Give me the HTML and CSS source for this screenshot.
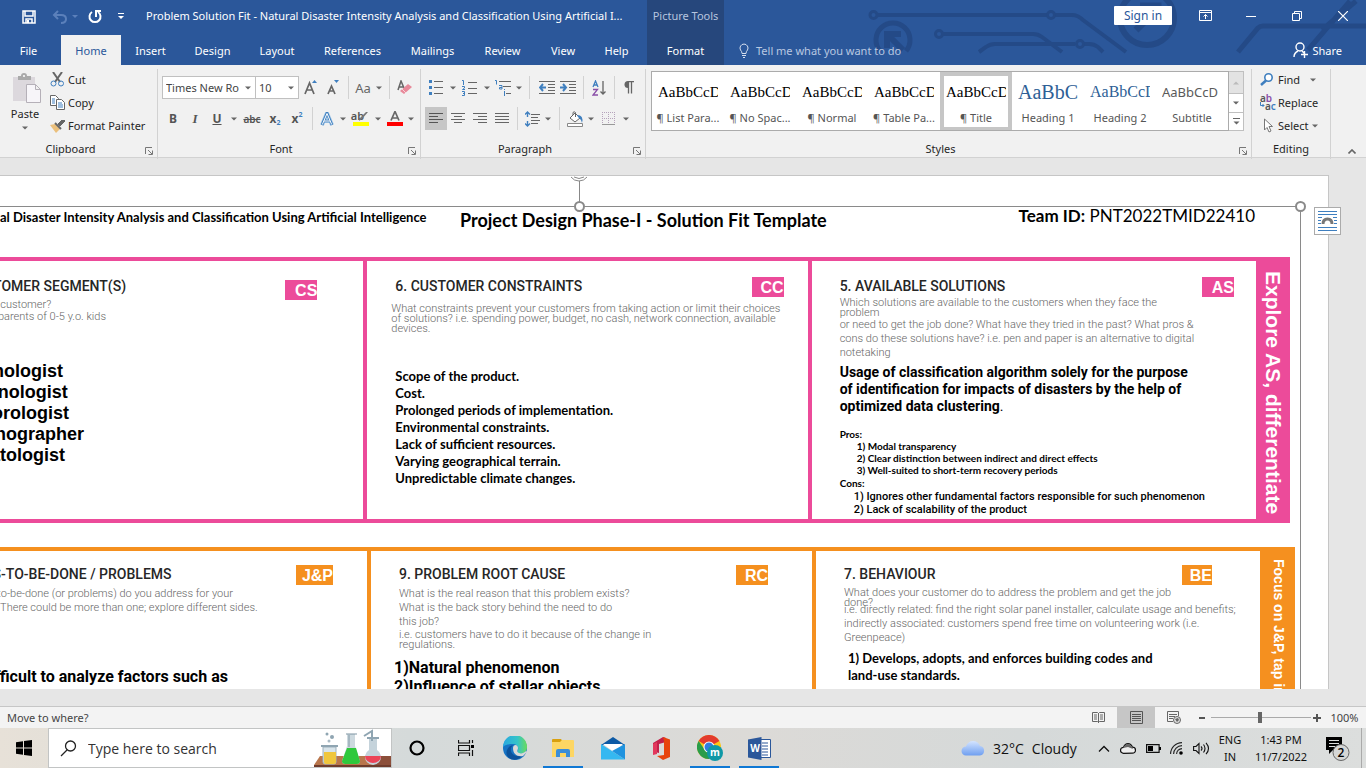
FILE: index.html
```html
<!DOCTYPE html>
<html lang="en">
<head>
<meta charset="utf-8">
<title>Problem Solution Fit - Word</title>
<link rel="stylesheet" href="styles.css">
</head>
<body>
<svg width="0" height="0" class="defs" aria-hidden="true">
  <symbol id="caret" viewBox="0 0 6 4"><path d="M0 0.5h6L3 3.5z" fill="#666"/></symbol>
  <symbol id="launch" viewBox="0 0 8 8"><path d="M.5 7V.5H7M3 3l4 4M7.5 3.5v4h-4" fill="none" stroke="#777"/></symbol>
</svg>
<div class="app">
  <header class="top">
    <svg class="circuit" viewBox="860 0 506 65" width="506" height="65" aria-hidden="true">
      <g fill="none" stroke="#244a87" stroke-width="4">
        <circle cx="873.500" cy="15" r="3.500" stroke-width="3"/><path d="M878 15h169M1055 15h17q6 0 11 5l43 32"/><circle cx="1051" cy="15" r="3.500" stroke-width="3"/>
        <circle cx="939" cy="34" r="3.500" stroke-width="3"/><path d="M943 34h90q5 0 9 3l20 15M979 52l7-5q4-3 9-3h80M1084 44h5q5 0 9 3l5 5"/><circle cx="1080" cy="44" r="3.500" stroke-width="3"/>
        <path d="M880 51a17 17 0 1 1 26 0" stroke-width="5"/><path d="M887 48V34h14M888 35l15 15" stroke-width="6"/>
        <circle cx="1147" cy="18" r="27" stroke-width="6"/><path d="M1136 30l22-22M1140 6h18v18" stroke-width="7"/>
        <path d="M1238 52l20-24q2-2 5-2h103M1308 50l42-49M1322 30l34-29" stroke-width="5"/>
      </g>
    </svg>
    <div class="titlebar">
      <div class="quick">
        <button aria-label="Save"><svg width="14" height="14" viewBox="0 0 14 14"><path d="M1 1h12v12H1zM3 1v5h8V1M4 13V9h6v4" fill="none" stroke="#fff" stroke-width="1.500"/><path d="M5 10h2v3H5z" fill="#fff"/></svg></button>
        <button aria-label="Undo"><svg width="26" height="14" viewBox="0 0 26 14"><path d="M6 1L2 5l4 4M2 5h7q5 0 5 4t-5 4" fill="none" stroke="#5b80bb" stroke-width="2"/><path d="M20 5h6l-3 3z" fill="#5b80bb"/></svg></button>
        <button aria-label="Redo"><svg width="14" height="15" viewBox="0 0 14 15"><path d="M4 3a5.500 5.500 0 1 0 6 0" fill="none" stroke="#fff" stroke-width="2"/><path d="M8 8V2h5" fill="none" stroke="#fff" stroke-width="2"/></svg></button>
        <button aria-label="Customize"><svg width="6" height="7" viewBox="0 0 6 7"><path d="M0 .5h6" stroke="#fff"/><path d="M0 3h6L3 6z" fill="#fff"/></svg></button>
      </div>
      <div class="doctitle">Problem Solution Fit - Natural Disaster Intensity Analysis and Classification Using Artificial I...</div>
      <div class="context">Picture Tools</div>
      <div class="wincontrols">
        <button class="signin">Sign in</button>
        <button aria-label="Ribbon options"><svg width="13" height="11" viewBox="0 0 13 11"><path d="M.5.5h12v10H.5zM.5 2.500h12M6.500 9V4.500M4.500 6.500l2-2 2 2" fill="none" stroke="#fff"/></svg></button>
        <button aria-label="Minimize"><svg width="10" height="10" viewBox="0 0 10 10"><path d="M0 5.500h10" stroke="#fff"/></svg></button>
        <button aria-label="Restore"><svg width="10" height="10" viewBox="0 0 10 10"><path d="M.5 2.500h7v7h-7zM2.500 2.500v-2h7v7h-2" fill="none" stroke="#fff"/></svg></button>
        <button aria-label="Close"><svg width="10" height="10" viewBox="0 0 10 10"><path d="M0 0l10 10M10 0L0 10" stroke="#fff" stroke-width="1.200"/></svg></button>
      </div>
    </div>
    <nav class="tabs">
      <button class="file">File</button><button class="active">Home</button><button>Insert</button><button>Design</button><button>Layout</button><button>References</button><button>Mailings</button><button>Review</button><button>View</button><button class="help">Help</button><button class="format">Format</button>
      <button class="tell"><svg width="10" height="15" viewBox="0 0 10 15"><path d="M3 10.500Q3 8.500 1.500 7a4 4 0 1 1 7 0Q7 8.500 7 10.500zM3 12.500h4M4 14.500h2" fill="none" stroke="#d5deee"/></svg>Tell me what you want to do</button>
      <button class="share"><svg width="16" height="16" viewBox="0 0 16 16"><circle cx="7" cy="5" r="4" fill="none" stroke="#fff" stroke-width="1.400"/><path d="M1 15q0-4 4-6M9 9l2 2M8 12.500h7M11.500 9v7" fill="none" stroke="#fff" stroke-width="1.400"/></svg>Share</button>
    </nav>
  </header>

  <section class="ribbon">
    <div class="group clipboard">
      <div class="body">
        <button class="paste"><svg width="30" height="32" viewBox="0 0 30 32"><path d="M1 4h22v24H1z" fill="#dcd8dd"/><path d="M6 7V3h3q0-3 3-3t3 3h4v4z" fill="#aaa"/><circle cx="12" cy="3" r="1" fill="#fff"/><path d="M14.500 11.500h9l5 5v13h-14zM23.500 11.500v5h5" fill="#f7f5f9" stroke="#b5b0b8"/></svg><span>Paste</span><svg width="6" height="4"><use href="#caret"/></svg></button>
        <div class="stack">
          <button><svg width="15" height="15" viewBox="0 0 15 15"><path d="M3 0l7 10M12 0L5 10" stroke="#666" stroke-width="2"/><circle cx="3.500" cy="11.500" r="2.500" fill="none" stroke="#3f7fbf"/><circle cx="11" cy="11.500" r="2.500" fill="none" stroke="#3f7fbf"/></svg>Cut</button>
          <button><svg width="15" height="15" viewBox="0 0 15 15"><path d="M.5.500h5l3 3v7h-8z" fill="#fff" stroke="#666"/><path d="M6.500 4.500h5l3 3v7h-8z" fill="#fff" stroke="#666"/><path d="M2 4h3M2 6h3M2 8h3M8 8h4M8 10h5M8 12h5" stroke="#3f7fbf"/></svg>Copy</button>
          <button><svg width="15" height="14" viewBox="0 0 15 14"><path d="M0 6l5-1 5 5-4 4z" fill="#ebc07c"/><path d="M5 4l6 6" stroke="#666" stroke-width="2"/><path d="M8 5l4-4 1 1 1-1 1 1-5 5z" fill="#666" stroke="#666"/></svg>Format Painter</button>
        </div>
      </div>
      <div class="label">Clipboard</div><svg class="launch" width="8" height="8"><use href="#launch"/></svg>
    </div>

    <div class="group fontgroup">
      <div class="body rows">
        <div class="row font1">
          <label class="combo"><select aria-label="Font"><option>Times New Ro</option></select><svg width="6" height="4"><use href="#caret"/></svg></label>
          <label class="combo size"><select aria-label="Font size"><option>10</option></select><svg width="6" height="4"><use href="#caret"/></svg></label>
          <button aria-label="Grow font"><svg width="14" height="15" viewBox="0 0 14 15"><path d="M1 14L5.500 3 10 14M2.500 10h6" fill="none" stroke="#666" stroke-width="1.700"/><path d="M8 3h5L10.500 0z" fill="#3f7fbf"/></svg></button>
          <button aria-label="Shrink font"><svg width="14" height="15" viewBox="0 0 14 15"><path d="M1 14L4.500 6 8 14M2 11h5" fill="none" stroke="#666" stroke-width="1.700"/><path d="M7 0h5L9.500 3z" fill="#3f7fbf"/></svg></button>
          <i class="sep"></i>
          <button class="case">Aa<svg width="6" height="4"><use href="#caret"/></svg></button>
          <i class="sep"></i>
          <button aria-label="Clear formatting"><svg width="15" height="15" viewBox="0 0 15 15"><path d="M1 10L4 1l3 7M2 7h4" fill="none" stroke="#666" stroke-width="1.500"/><path d="M3 11l8-7 4 3-8 7z" fill="#e8899a"/><path d="M5 9l4 4" stroke="#f8d5da"/></svg></button>
        </div>
        <div class="row font2">
          <button class="b">B</button><button class="it">I</button><button class="u">U</button><button aria-label="Underline style"><svg width="6" height="4"><use href="#caret"/></svg></button>
          <button class="strike">abc</button><button class="sub">x<sub>2</sub></button><button class="sub">x<sup>2</sup></button><i class="sep"></i>
          <button aria-label="Text effects"><svg width="14" height="14" viewBox="0 0 14 14"><path d="M2 13L7 1l5 12M4 9h6" fill="none" stroke="#a9cbe8" stroke-width="4"/><path d="M2 13L7 1l5 12M4 9h6" fill="none" stroke="#3f7fbf" stroke-width="2.600"/><path d="M2.300 12.500L7 1.500l4.700 11M4 9h6" fill="none" stroke="#fff"/></svg></button><button aria-label="Effects menu"><svg width="6" height="4"><use href="#caret"/></svg></button>
          <button class="mark" aria-label="Highlight">ab<svg width="16" height="15" viewBox="0 0 16 15"><path d="M15 1L9 8l-3 2 1-3 6-6z" fill="#777"/><path d="M0 11h16v4H0z" fill="#ff0"/></svg></button><button aria-label="Highlight menu"><svg width="6" height="4"><use href="#caret"/></svg></button>
          <button aria-label="Font color"><svg width="16" height="15" viewBox="0 0 16 15"><path d="M4 9.500L8 .5l4 9M5.500 7h5" fill="none" stroke="#666" stroke-width="1.700"/><path d="M0 11h16v4H0z" fill="red"/></svg></button><button aria-label="Color menu"><svg width="6" height="4"><use href="#caret"/></svg></button>
        </div>
      </div>
      <div class="label">Font</div><svg class="launch" width="8" height="8"><use href="#launch"/></svg>
    </div>

    <div class="group paragraph">
      <div class="body rows">
        <div class="row para1">
          <button aria-label="Bullets"><svg width="14" height="15" viewBox="0 0 14 15"><path d="M5 1.500h9M5 7.500h9M5 13.500h9" stroke="#666"/><path d="M0 0h3v3H0zM0 6h3v3H0zM0 12h3v3H0z" fill="#3f7fbf"/></svg></button><button aria-label="Bullets menu"><svg width="6" height="4"><use href="#caret"/></svg></button>
          <button aria-label="Numbering"><svg width="15" height="16" viewBox="0 0 15 16"><path d="M6 2.500h9M6 8.500h9M6 13.500h9" stroke="#666"/><path d="M0 .500h1.500V5M0 6.500h2.500v1.500L.5 9.500H3M0 11.500h2.500v4H0M1 13.500h1.500" fill="none" stroke="#3f7fbf"/></svg></button><button aria-label="Numbering menu"><svg width="6" height="4"><use href="#caret"/></svg></button>
          <button aria-label="Multilevel list"><svg width="17" height="16" viewBox="0 0 17 16"><path d="M4 1.500h12M8 6.500h8M11 13.500h5" stroke="#666"/><path d="M0 .500h1.500v4M4 5.500h3V9H4.500V7.500H7M9.500 9v1M9.500 11v5" fill="none" stroke="#3f7fbf"/></svg></button><button aria-label="Multilevel menu"><svg width="6" height="4"><use href="#caret"/></svg></button>
          <i class="sep"></i>
          <button aria-label="Decrease indent"><svg width="16" height="14" viewBox="0 0 16 14"><path d="M0 .5h16M9 3.500h7M9 6.500h7M9 9.500h7M0 12.500h16" stroke="#666"/><path d="M1 6.500h6M4 3L1 6.500 4 10" fill="none" stroke="#3f7fbf" stroke-width="2"/></svg></button>
          <button aria-label="Increase indent"><svg width="16" height="14" viewBox="0 0 16 14"><path d="M0 .5h16M9 3.500h7M9 6.500h7M9 9.500h7M0 12.500h16" stroke="#666"/><path d="M0 6.500h6M3 3l3 3.500L3 10" fill="none" stroke="#3f7fbf" stroke-width="2"/></svg></button>
          <i class="sep"></i>
          <button aria-label="Sort"><svg width="14" height="16" viewBox="0 0 14 16"><path d="M1 7l2.500-6L6 7M2 5h3" fill="none" stroke="#3f7fbf" stroke-width="1.300"/><path d="M1 9.500h4.500L1 15h5" fill="none" stroke="#8a4fa8" stroke-width="1.300"/><path d="M11 1v13M8.500 11.500L11 14l2.500-2.500" fill="none" stroke="#666" stroke-width="1.300"/></svg></button>
          <i class="sep"></i>
          <button aria-label="Show marks"><svg width="10" height="13" viewBox="0 0 10 13"><path d="M4.500 0v12.500M7.500 0v12.500M4 .5h6" fill="none" stroke="#666" stroke-width="1.300"/><path d="M4.500 0H4a3.500 3.500 0 0 0 0 7h.5z" fill="#666"/></svg></button>
        </div>
        <div class="row para2">
          <button class="on" aria-label="Align left"><svg width="14" height="13" viewBox="0 0 14 13"><path d="M0 1.500h14M0 4.500h9M0 7.500h14M0 10.500h9" stroke="#555"/></svg></button>
          <button aria-label="Center"><svg width="14" height="13" viewBox="0 0 14 13"><path d="M0 1.500h14M3 4.500h8M0 7.500h14M3 10.500h8" stroke="#666"/></svg></button>
          <button aria-label="Align right"><svg width="14" height="13" viewBox="0 0 14 13"><path d="M0 1.500h14M5 4.500h9M0 7.500h14M5 10.500h9" stroke="#666"/></svg></button>
          <button aria-label="Justify"><svg width="14" height="13" viewBox="0 0 14 13"><path d="M0 1.500h14M0 4.500h14M0 7.500h14M0 10.500h14" stroke="#666"/></svg></button>
          <i class="sep"></i>
          <button aria-label="Line spacing"><svg width="15" height="16" viewBox="0 0 15 16"><path d="M6 3.500h9M6 6.500h7M6 9.500h9M6 12.500h7" stroke="#666"/><path d="M2.500 1v5M2.500 10v5M0 3.500L2.500 1 5 3.500M0 12.500L2.500 15 5 12.500" fill="none" stroke="#3f7fbf" stroke-width="1.400"/></svg></button><button aria-label="Spacing menu"><svg width="6" height="4"><use href="#caret"/></svg></button>
          <i class="sep"></i>
          <button aria-label="Shading"><svg width="17" height="16" viewBox="0 0 17 16"><path d="M3 7l5-5 5 5-5 4zM6 4V1.500q1-1.500 2.500 0V6" fill="#fff" stroke="#666"/><path d="M10 4q7 0 5 8-1-4-4-6z" fill="#3f7fbf"/><path d="M.5 12.500h15v3H.5z" fill="#fff" stroke="#888"/></svg></button><button aria-label="Shading menu"><svg width="6" height="4"><use href="#caret"/></svg></button>
          <button aria-label="Borders"><svg width="13" height="13" viewBox="0 0 13 13"><path d="M.5 0v12M6.500 0v12M12.500 0v12M0 .5h13M0 6.500h13" stroke="#b5a3bb" stroke-dasharray="1 1"/><path d="M0 12.500h13" stroke="#999"/></svg></button><button aria-label="Borders menu"><svg width="6" height="4"><use href="#caret"/></svg></button>
        </div>
      </div>
      <div class="label">Paragraph</div><svg class="launch" width="8" height="8"><use href="#launch"/></svg>
    </div>

    <div class="group styles">
      <div class="body">
        <div class="gallery">
          <button><b>AaBbCcD</b><span>¶ List Para...</span></button>
          <button><b>AaBbCcD</b><span>¶ No Spac...</span></button>
          <button><b>AaBbCcD</b><span>¶ Normal</span></button>
          <button><b>AaBbCcD</b><span>¶ Table Pa...</span></button>
          <button class="picked"><b>AaBbCcD</b><span>¶ Title</span></button>
          <button><b class="h1">AaBbC</b><span>Heading 1</span></button>
          <button><b class="h2">AaBbCcD</b><span>Heading 2</span></button>
          <button><b class="st">AaBbCcD</b><span>Subtitle</span></button>
        </div>
        <div class="scroller">
          <button class="off" aria-label="Up"><svg width="6" height="4" viewBox="0 0 6 4"><path d="M0 3.500h6L3 .5z" fill="#bbb"/></svg></button>
          <button aria-label="Down"><svg width="6" height="4"><use href="#caret"/></svg></button>
          <button aria-label="More styles"><svg width="7" height="7" viewBox="0 0 7 7"><path d="M0 .5h7" stroke="#666"/><path d="M.5 3.500h6l-3 3z" fill="#666"/></svg></button>
        </div>
      </div>
      <div class="label">Styles</div><svg class="launch" width="8" height="8"><use href="#launch"/></svg>
    </div>

    <div class="group editing">
      <div class="body">
        <div class="stack">
          <button><svg width="15" height="13" viewBox="0 0 15 13"><circle cx="8.500" cy="4.500" r="3.700" fill="#fff" stroke="#3f7fbf" stroke-width="1.600"/><path d="M6 7.500l-5 4.500" stroke="#3f7fbf" stroke-width="2.500"/></svg>Find<svg class="far" width="6" height="4"><use href="#caret"/></svg></button>
          <button><span class="abac"><span>a<em>b</em></span><span><svg width="5" height="6" viewBox="0 0 5 6"><path d="M.5 0v3.500H4M2.500 2L4 3.500 2.500 5" fill="none" stroke="#3f7fbf"/></svg>a<u>c</u></span></span>Replace</button>
          <button><svg width="15" height="15" viewBox="0 0 15 15"><path d="M4.500 1v11l2.500-2.500 2 4.500 2-1-2-4.500h3.500z" fill="#fff" stroke="#777"/></svg>Select<svg class="near" width="6" height="4"><use href="#caret"/></svg></button>
        </div>
      </div>
      <div class="label">Editing</div>
    </div>
    <button class="collapse" aria-label="Collapse ribbon"><svg width="8" height="5" viewBox="0 0 8 5"><path d="M.5 4.500L4 1l3.500 3.500" fill="none" stroke="#666" stroke-width="1.600"/></svg></button>
  </section>

  <main class="workspace">
    <article class="sheet">
      <div class="picture">
        <svg class="rotator" width="18" height="31" viewBox="0 0 18 31"><path d="M1 1q3 4 8 4t8-4M4 1q5 3 10 0M9.500 5v26" fill="none" stroke="#888"/></svg>
        <i class="handle top-mid"></i><i class="handle end"></i>
        <button class="layoutopt" aria-label="Layout options"><svg width="19" height="20" viewBox="0 0 19 20"><path d="M0 .5h19M0 3.500h19M0 16.500h19M0 19.500h19M0 6.500h4M15 6.500h4M0 9.500h3M16 9.500h3M0 12.500h3M16 12.500h3" stroke="#3f7fbf"/><path d="M5 13q0-5 4.500-5t4.500 5" fill="none" stroke="#777" stroke-width="3"/></svg></button>
        <div class="heads">
          <p class="hl">al Disaster Intensity Analysis and Classification Using Artificial Intelligence</p>
          <h1>Project Design Phase-I - Solution Fit Template</h1>
          <p class="team"><b>Team ID:</b> PNT2022TMID22410</p>
        </div>
        <section class="board pink">
          <div class="cell segment">
            <span class="tag">CS</span>
            <h2>1. CUSTOMER SEGMENT(S)</h2>
            <p class="hint mid">Who is your customer?<br>i.e. working parents of 0-5 y.o. kids</p>
            <p class="roles">Seismologist<br>Volcanologist<br>Meteorologist<br>Oceanographer<br>Climatologist</p>
          </div>
          <div class="cell limits">
            <span class="tag">CC</span>
            <h2>6. CUSTOMER CONSTRAINTS</h2>
            <p class="hint snug out">What constraints prevent your customers from taking action or limit their choices<br>of solutions? i.e. spending power, budget, no cash, network connection, available<br>devices.</p>
            <p class="points">Scope of the product.<br>Cost.<br>Prolonged periods of implementation.<br>Environmental constraints.<br>Lack of sufficient resources.<br>Varying geographical terrain.<br>Unpredictable climate changes.</p>
          </div>
          <div class="cell answers">
            <span class="tag">AS</span>
            <h2>5. AVAILABLE SOLUTIONS</h2>
            <p class="hint snug">Which solutions are available to the customers when they face the<br>problem</p>
            <p class="hint loose">or need to get the job done? What have they tried in the past? What pros &amp;<br>cons do these solutions have? i.e. pen and paper is an alternative to digital<br>notetaking</p>
            <p class="usage">Usage of classification algorithm solely for the purpose<br>of identification for impacts of disasters by the help of<br>optimized data clustering<span>.</span></p>
            <div class="pros"><p>Pros:</p><p class="in">1) Modal transparency<br>2) Clear distinction between indirect and direct effects<br>3) Well-suited to short-term recovery periods</p></div>
            <div class="cons"><p>Cons:</p><p class="in">1) Ignores other fundamental factors responsible for such phenomenon<br>2) Lack of scalability of the product</p></div>
          </div>
          <div class="side">Explore AS, differentiate</div>
        </section>
        <section class="board orange">
          <div class="cell segment">
            <span class="tag">J&amp;P</span>
            <h2>2. JOBS-TO-BE-DONE / PROBLEMS</h2>
            <p class="hint loose">Which jobs-to-be-done (or problems) do you address for your<br>customers? There could be more than one; explore different sides.</p>
            <p class="factor">It is difficult to analyze factors such as</p>
          </div>
          <div class="cell limits">
            <span class="tag">RC</span>
            <h2>9. PROBLEM ROOT CAUSE</h2>
            <p class="hint loose">What is the real reason that this problem exists?<br>What is the back story behind the need to do<br>this job?</p>
            <p class="hint snug">i.e. customers have to do it because of the change in<br>regulations.</p>
            <p class="cause">1)Natural phenomenon<br>2)Influence of stellar objects</p>
          </div>
          <div class="cell answers">
            <span class="tag">BE</span>
            <h2>7. BEHAVIOUR</h2>
            <p class="hint snug">What does your customer do to address the problem and get the job<br>done?</p>
            <p class="hint loose tuck">i.e. directly related: find the right solar panel installer, calculate usage and benefits;<br>indirectly associated: customers spend free time on volunteering work (i.e.<br>Greenpeace)</p>
            <p class="points codes">1) Develops, adopts, and enforces building codes and<br>land-use standards.</p>
          </div>
          <div class="side">Focus on J&amp;P, tap into</div>
        </section>
      </div>
    </article>
  </main>

  <footer class="status">
    <span class="msg">Move to where?</span>
    <button aria-label="Read mode"><svg width="13" height="13" viewBox="0 0 13 13"><path d="M.5 1.500h5l1 1 1-1h5v9h-5l-1 1-1-1h-5zM6.500 2v10M2 4h3M2 6h3M2 8h3M8 4h3M8 6h3M8 8h3" fill="none" stroke="#666"/></svg></button>
    <button class="on" aria-label="Print layout"><svg width="13" height="13" viewBox="0 0 13 13"><path d="M.5.500h12v12H.5zM2 3.500h9M2 5.500h9M2 7.500h9M2 9.500h9" fill="none" stroke="#555"/></svg></button>
    <button aria-label="Web layout"><svg width="14" height="13" viewBox="0 0 14 13"><path d="M6 10.500H.5V.500h11V5M2 3.500h8M2 5.500h6M2 7.500h4" fill="none" stroke="#666"/><circle cx="10" cy="9" r="3.500" fill="#ddd" stroke="#666"/><path d="M8 8l3-1 1 2-2 2z" fill="#666"/></svg></button>
    <div class="zoom"><svg width="6" height="6" viewBox="0 0 6 6"><path d="M0 3h6" stroke="#555" stroke-width="2"/></svg><input type="range" min="0" max="100" value="49" aria-label="Zoom"><svg width="8" height="8" viewBox="0 0 8 8"><path d="M0 4h8M4 0v8" stroke="#555" stroke-width="2"/></svg></div>
    <span class="pct">100%</span>
  </footer>

  <nav class="taskbar">
    <button class="start" aria-label="Start"><svg width="16" height="16" viewBox="0 0 16 16"><path d="M0 2.200L7 1.200v6.300H0zM8 1l8-1v7.500H8zM0 8.500h7v6.300L0 13.800zM8 8.500h8V16l-8-1z"/></svg></button>
    <label class="search"><svg width="17" height="17" viewBox="0 0 17 17"><circle cx="10.500" cy="6" r="5" fill="none" stroke="#222" stroke-width="1.300"/><path d="M7 10l-6 6" stroke="#222" stroke-width="1.300"/></svg><input type="text" placeholder="Type here to search" aria-label="Search">
      <svg class="lab" width="77" height="38" viewBox="0 0 77 38"><path d="M6 27h71v9H0z" fill="#b9764c"/><path d="M0 36h77v2H0z" fill="#6f3c2c"/><path d="M64 27h13v9H60z" fill="#8c4f3a"/><path d="M9 18h13v15q0 2-2 2h-9q-2 0-2-2z" fill="#d8e4ea" stroke="#9fb2bd"/><path d="M10 23h12v10q0 2-2 2h-8q-2 0-2-2z" fill="#f0c63c"/><path d="M7 17h17" stroke="#8fa5b2" stroke-width="2"/><circle cx="13" cy="5" r="1.500" fill="#8fa5b2"/><circle cx="18" cy="8" r="2" fill="#8fa5b2"/><circle cx="15" cy="12" r="1.500" fill="#a9bac4"/><path d="M33 5h8v12l5 15q0 3-3 3H31q-3 0-3-3l5-15z" fill="#cdd9df"/><path d="M33 19h9l4 13q0 3-3 3H31q-3 0-3-3z" fill="#2fc83c"/><path d="M32 5h11M35 6v12" stroke="#7e95a3"/><path d="M55 8h8v13a8 8 0 1 1-8 0z" fill="#c5d3db"/><path d="M51 27a8 7 0 0 0 16 0z" fill="#ec4458"/><path d="M53 9h12M50 7l8-5v10" fill="none" stroke="#8fa5b2" stroke-width="2"/></svg></label>
    <div class="apps">
      <button aria-label="Cortana"><svg width="16" height="16" viewBox="0 0 16 16"><circle cx="8" cy="8" r="6.500" fill="none" stroke="#000" stroke-width="2.200"/></svg></button>
      <button aria-label="Task view"><svg width="16" height="16" viewBox="0 0 16 16"><path d="M.5 0v3h11V0M.5 16v-3h11v3M.5 5.500h11v5H.5zM14.500 0v3M14.500 10v6" fill="none" stroke="#111" stroke-width="1.200"/><path d="M13 5h3v3h-3z"/></svg></button>
      <button aria-label="Edge"><svg width="24" height="24" viewBox="0 0 24 24"><defs><linearGradient id="e1"><stop stop-color="#2aa8e0"/><stop offset=".6" stop-color="#35c4c8"/><stop offset="1" stop-color="#6bdc5c"/></linearGradient></defs><circle cx="12" cy="12" r="12" fill="#1673c4"/><path d="M0 11A12 12 0 0 1 24 11c0 5-4 7-8 7-3 0-2-2-1-4 1-4-2-6-5-6-5 0-9 1-10 3z" fill="url(#e1)"/><path d="M10 9c-5 5-1 13 9 11-4 5-10 4-13 2-5-4-2-12 4-13z" fill="#0c529b"/><path d="M10 12c0-4 5-4 5 0 0 2-2 4 1 5 2 1 5 0 7-2l1 1-4 4c-6 1-10-2-10-8z" fill="#d9dad8"/></svg></button>
      <button class="run" aria-label="File Explorer"><svg width="22" height="19" viewBox="0 0 22 19"><path d="M0 1q0-1 1-1h8l2 3H0z" fill="#d9a00e"/><path d="M0 3h8l2-2h11q1 0 1 1v16H0z" fill="#fdd663"/><path d="M4 18v-6q0-2 2-2h10q2 0 2 2v6h-4v-4H8v4z" fill="#3b8ed8"/></svg></button>
      <button aria-label="Mail"><svg width="24" height="23" viewBox="0 0 24 23"><path d="M0 8l12-8 12 8z" fill="#0d5aa5"/><path d="M2 7h20l-9 8z" fill="#fff"/><path d="M0 7l24 15.500H0z" fill="#35b8f1"/><path d="M24 7v15.500L11 14z" fill="#1f93df"/></svg></button>
      <button aria-label="Office"><svg width="18" height="23" viewBox="0 0 18 23"><path d="M0 6l10-6 3 1v4l-7 2v9l-4-1-2-2z" fill="#c3204a"/><path d="M10 0l7 2.500V20l-7 3-6-4 7-1V4z" fill="#e8440c"/><path d="M0 7l4-2v12l-4 1z" fill="#e2385c"/></svg></button>
      <button class="run" aria-label="Chrome"><svg width="26" height="26" viewBox="0 0 26 26"><circle cx="12" cy="12" r="12" fill="#fbc619"/><path d="M12 12L1.600 6A12 12 0 0 1 22.400 6z" fill="#e33b2e"/><path d="M1.600 6A12 12 0 0 0 12 24l5-9-9 0z" fill="#2a9c4a"/><circle cx="12" cy="12" r="5.500" fill="#fff"/><circle cx="12" cy="12" r="4.500" fill="#2f7de1"/><circle cx="18" cy="18" r="8" fill="#0e98a6"/><text x="18" y="21" text-anchor="middle" class="badge">m</text></svg></button>
      <button class="run" aria-label="Word"><svg width="23" height="23" viewBox="0 0 23 23"><path d="M11 2.500h11.500v18H11z" fill="#fff" stroke="#2b579a"/><path d="M14 6h6M14 9h6M14 12h6M14 15h6M14 18h6" stroke="#2b579a"/><path d="M0 2.500L13.500 0v23L0 20.500z" fill="#2b579a"/><text x="7" y="15" text-anchor="middle" class="badge">W</text></svg></button>
    </div>
    <div class="tray">
      <button class="weather"><svg width="24" height="16" viewBox="0 0 24 16"><defs><linearGradient id="c1" x2="0" y2="1"><stop stop-color="#d4e4ff"/><stop offset="1" stop-color="#6f9ff0"/></linearGradient></defs><path d="M5 15.500a4.500 4.500 0 0 1 0-9Q7 1 12 1t7 5a4.800 4.800 0 0 1 0 9.500z" fill="url(#c1)"/></svg><span>32°C</span><span>Cloudy</span></button>
      <button aria-label="Show hidden icons"><svg width="12" height="7" viewBox="0 0 12 7"><path d="M1 6.500l5-5 5 5" fill="none" stroke="#111" stroke-width="1.300"/></svg></button>
      <button aria-label="OneDrive"><svg width="16" height="11" viewBox="0 0 16 11"><path d="M3.500 10.300a3 3 0 0 1 0-6Q5 .7 8 .7t4.500 3.500a3 3 0 0 1 0 6z" fill="#eee" stroke="#111" stroke-width="1.200"/><path d="M3 5Q5 1 8 1t5 5l-5-2z" fill="#666"/></svg></button>
      <button aria-label="Battery"><svg width="15" height="9" viewBox="0 0 15 9"><path d="M.6.6h12.500v7.800H.6z" fill="none" stroke="#111" stroke-width="1.200"/><path d="M2 2h5v5H2zM13 3h2v3h-2z"/></svg></button>
      <button aria-label="Network"><svg width="13" height="13" viewBox="0 0 13 13"><path d="M.6 12A11.500 11.500 0 0 1 12 .6M3.600 12A8.500 8.500 0 0 1 12 3.600M6.600 12A5.500 5.500 0 0 1 12 6.600" fill="none" stroke="#222" stroke-width="1.100"/><circle cx="11" cy="11" r="1.800"/></svg></button>
      <button aria-label="Volume"><svg width="17" height="13" viewBox="0 0 17 13"><path d="M.6 4.500h2.400L6 1.500v10l-3-3H.6zM8 4.500q2 2 0 4M10.500 2.500q3 4 0 8M13 .8q5 5.700 0 11.400" fill="none" stroke="#111" stroke-width="1.100"/></svg></button>
      <div class="lines">ENG<br>IN</div>
      <div class="lines">1:43 PM<br>11/7/2022</div>
      <button class="notes" aria-label="Notifications"><svg width="26" height="26" viewBox="0 0 26 26"><path d="M1 2h16v13H8l-4 4v-4H1z"/><path d="M4 5.500h10M4 8.500h10M4 11.500h6" stroke="#dcdedd"/><circle cx="16" cy="17.500" r="8" fill="#d5d6d5" stroke="#666"/><text x="16" y="22" text-anchor="middle" class="count">2</text></svg></button>
    </div>
  </nav>
</div>
</body>
</html>
```
FILE: styles.css
```css
* { box-sizing: border-box; }
body { margin: 0; color: #262626; }
button, input, select { font: inherit; color: inherit; background: none; border: 0; padding: 0; margin: 0; }
button { white-space: nowrap; }
p, h1, h2 { margin: 0; }
svg { display: block; flex: none; }
.defs { position: absolute; }
.app { height: 100vh; display: flex; flex-direction: column; overflow: hidden; font: 11px "Noto Sans", "Open Sans", sans-serif; }

.top { position: relative; background: #2b579a; color: #fff; flex: none; }
.circuit { position: absolute; right: 0; top: 0; }
.titlebar { position: relative; height: 35px; display: grid; grid-template-columns: 146px 501px 77px 1fr; align-items: center; }
.quick { display: flex; align-items: center; gap: 16px; padding: 0 0 2px 22px; }
.quick button:nth-child(3) { margin-left: -6px; }
.doctitle { white-space: nowrap; padding-bottom: 4px; }
.context { align-self: stretch; background: #26477c; color: #b6c5df; line-height: 32px; text-align: center; }
.wincontrols { display: flex; justify-content: flex-end; align-items: center; padding-bottom: 4px; }
.wincontrols button { width: 46px; display: grid; place-items: center; }
.wincontrols .signin { width: 58px; height: 19px; background: #fff; color: #2b579a; margin-right: 10px; border-radius: 1px; font-size: 12px; }
.tabs { position: relative; height: 30px; display: grid; grid-template-columns: 61px 60px 59px 65px 64px 87px 73px 67px 54px 57px 77px 1fr auto; }
.tabs .file, .tabs .help { padding-right: 4px; }
.tabs .active { background: #f1f1f1; color: #2b579a; }
.tabs .format { background: #26477c; }
.tabs .tell, .tabs .share { display: flex; align-items: center; gap: 7px; }
.tabs .tell { padding-left: 15px; color: #b9c8e1; }
.tabs .share { padding-right: 24px; gap: 3px; }

.ribbon { height: 93px; flex: none; display: grid; grid-template-columns: 158px 263px 225px 1fr 79px 35px; background: #f1f1f1; border-bottom: 1px solid #d2d2d2; padding: 4px 0 3px; }
.group { position: relative; border-right: 1px solid #d2d2d2; display: flex; flex-direction: column; }
.group .body { height: 70px; display: flex; }
.group .label { line-height: 20px; text-align: center; padding-right: 16px; }
.launch { position: absolute; right: 4px; bottom: 4px; }
.paste { width: 50px; display: flex; flex-direction: column; align-items: center; gap: 1px; padding-top: 4px; }
.paste span { line-height: 15px; margin-bottom: 4px; }
.paste svg:first-child { margin-left: 4px; }
.stack { display: grid; grid-template-rows: repeat(3, 23px); margin-top: -1px; }
.stack button { display: flex; align-items: center; gap: 3px; }
.stack .far { margin-left: 7px; }
.rows { flex-direction: column; padding: 7px 4px 0; gap: 8px; }
.row { display: grid; height: 23px; }
.row button { display: grid; place-items: center; color: #555; }
.font1 { grid-template-columns: 94px 43px 24px 22px 6px 35px 6px 25px; }
.font2 { grid-template-columns: 22px 22px 22px 12px 24px 22px 22px 8px 22px 10px 25px 10px 23px 10px; }
.para1 { grid-template-columns: 22px 11px 23px 11px 22px 9px 13px 21px 22px 8px 24px 6px 24px; }
.para2 { grid-template-columns: 22px 22px 22px 22px 9px 20px 11px 12px 20px 12px 23px 11px; }
.sep { width: 1px; background: #d2d2d2; justify-self: center; }
.combo { position: relative; border: 1px solid #c0c0c0; background: #fff; }
.combo.size { border-left: 0; }
.combo select { appearance: none; width: 100%; height: 100%; padding-left: 3px; color: #444; }
.combo svg { position: absolute; right: 4px; top: 9px; }
.row .case { display: flex; align-items: center; justify-content: center; gap: 5px; font-size: 13px; color: #666; }
.row .b, .row .it, .row .u { font-weight: 700; font-size: 12px; }
.row .it { font-family: "Liberation Serif", serif; font-style: italic; font-size: 13px; }
.row .u { text-decoration: underline; }
.row .strike { text-decoration: line-through; font-weight: 600; font-size: 10px; }
.row .sub { display: flex; align-items: center; justify-content: center; font-weight: 700; font-size: 12px; }
.sub sub, .sub sup { font-size: 7px; color: #3f7fbf; }
.sub sub { padding-top: 8px; }
.sub sup { padding-bottom: 8px; }
.row .mark { position: relative; line-height: 11px; padding: 0 6px 7px 0; font-weight: 600; }
.mark svg { position: absolute; left: 5px; top: 4px; }
.on { background: #c6c6c6; }
.styles .body { padding: 2px 7px 0 5px; }
.gallery { flex: 1; height: 60px; border: 1px solid #ababab; background: #fff; display: grid; grid-template-columns: repeat(8, 72px); overflow: hidden; }
.gallery button { display: flex; flex-direction: column; align-items: center; padding: 0 6px; color: #555; }
.gallery b { width: 60px; overflow: hidden; text-align: left; font: 15px/40px "Liberation Serif", serif; color: #000; height: 37px; }
.gallery span { line-height: 18px; }
.gallery .picked { border: 4px solid #c6c6c6; padding: 0 2px; }
.gallery .picked b { height: 33px; line-height: 32px; }
.gallery .h1 { font-size: 20px; color: #2e5f96; }
.gallery .h2 { font-size: 16px; color: #2e5f96; }
.gallery .st { font: 13px/40px "Noto Sans", sans-serif; color: #5a5a5a; }
.scroller { width: 15px; height: 60px; display: grid; grid-template-rows: 22px 19px 19px; }
.scroller button { border: 1px solid #c0c0c0; border-left: 0; border-bottom: 0; display: grid; place-items: center; background: #fff; }
.scroller button:last-child { border-bottom: 1px solid #c0c0c0; }
.scroller .off { background: #e3e3e3; }
.editing .stack { padding-left: 8px; }
.editing .label { padding-right: 0; }
.abac { width: 15px; font-size: 10px; line-height: 8px; font-weight: 600; color: #555; padding-bottom: 2px; }
.abac > span { display: flex; }
.abac em { font-style: normal; color: #8a4fa8; }
.abac u { text-decoration: none; color: #3f7fbf; }
.collapse { align-self: end; justify-self: center; padding-bottom: 5px; margin-left: 6px; }

.workspace { flex: 1; min-height: 0; background: #e6e6e6; padding: 17px 37px 17px 0; overflow: hidden; }
.sheet { height: 100%; background: #fff; border: 1px solid #c6c6c6; border-left: 0; border-bottom: 0; padding: 30px 27px 0 0; clip-path: inset(0 -40px 0 0); }
.picture { position: relative; border-top: 1px solid #8a8a8a; border-right: 1px solid #8a8a8a; height: 560px; color: #000; }
.rotator { position: absolute; left: 570px; top: -31px; }
.handle { position: absolute; width: 11px; height: 11px; border: 2px solid #8a8a8a; border-radius: 50%; background: #fff; }
.handle.top-mid { left: 574px; top: -6px; }
.handle.end { right: -6px; top: -6px; }
.layoutopt { position: absolute; right: -41px; top: 0; width: 27px; height: 28px; border: 1px solid #ababab; background: #fff; display: grid; place-items: center; }
.heads { display: grid; grid-template-columns: 460px 1fr auto; height: 50px; font-family: Lato, sans-serif; padding-right: 45px; white-space: nowrap; }
.hl { font-weight: 700; font-size: 13px; line-height: 20px; }
.heads h1 { font-size: 18px; line-height: 26px; }
.team { font-size: 17px; line-height: 18px; }

.board { margin-left: -64px; display: grid; font-family: Roboto, sans-serif; border-top: 4px solid var(--c); white-space: nowrap; }
.pink { --c: #ec4b9a; height: 266px; border-bottom: 4px solid var(--c); margin-right: 10px; grid-template-columns: minmax(0, 431fr) minmax(0, 444fr) minmax(0, 444fr) 34px; }
.orange { --c: #f5901f; height: 200px; margin: 24px 5px 0 -64px; grid-template-columns: minmax(0, 435fr) minmax(0, 445fr) minmax(0, 444fr) 35px; }
.cell { position: relative; border-right: 4px solid var(--c); padding: 15px 0 0 28px; }
.orange .cell { padding-top: 13px; }
.cell.segment { padding-left: 15px; }
.cell.answers { border-right: 0; }
.cell h2 { font-size: 14px; line-height: 20px; font-weight: 500; color: #262626; margin-bottom: 1px; }
.orange h2 { margin-bottom: 3px; }
.hint { font-size: 11px; font-weight: 300; color: #666; }
.segment .hint { margin-left: -10px; }
.hint.mid { line-height: 12px; padding-top: 2px; }
.hint.snug { line-height: 10px; padding-top: 1px; }
.hint.loose { line-height: 14px; }
.hint.out { margin-left: -4px; padding-top: 7px; }
.hint.tuck { margin-top: -5px; }
.tag { position: absolute; top: 19px; right: 46px; height: 20px; width: 32px; background: var(--c); color: #fff; font: 700 16px/21px "Liberation Sans", sans-serif; text-align: right; }
.limits .tag { right: 24px; top: 16px; }
.answers .tag { right: 22px; top: 16px; }
.orange .tag { top: 14px; }
.orange .segment .tag { right: 34px; width: 37px; }
.orange .limits .tag { right: 44px; }
.orange .answers .tag { right: 48px; width: 30px; }
.roles { font: 700 18px/21px "Liberation Sans", sans-serif; padding-top: 38px; }
.points { font: 700 13px/17px Lato, sans-serif; padding-top: 34px; }
.usage { font-size: 14px; line-height: 17px; font-weight: 700; padding-top: 4px; }
.usage span { font-weight: 400; }
.pros, .cons { font: 700 10px/12px Lato, sans-serif; padding-top: 13px; }
.cons { line-height: 13px; padding-top: 1px; }
.in { padding-left: 17px; }
.cons .in { padding-left: 14px; font-family: Roboto, sans-serif; font-size: 11px; font-weight: 500; }
.side { background: var(--c); color: #fff; writing-mode: vertical-rl; font: 700 21px/34px "Liberation Sans", sans-serif; padding-top: 10px; overflow: hidden; }
.orange .side { font-size: 14px; line-height: 32px; padding-top: 8px; }
.factor { font: 700 16px/20px Roboto, sans-serif; padding-top: 52px; }
.cause { font: 700 16px/19px Roboto, sans-serif; padding-top: 8px; margin-left: -5px; }
.points.codes { padding: 5px 0 0 4px; }

.status { height: 22px; flex: none; background: #f3f3f3; border-top: 1px solid #c6c6c6; display: flex; align-items: stretch; color: #444; }
.status > * { display: grid; place-items: center; }
.msg { margin-right: auto; padding-left: 7px; }
.status button { width: 38px; }
.zoom { grid-template-columns: 18px 100px 12px; }
.zoom input { appearance: none; width: 100px; height: 13px; background: linear-gradient(#aaa, #aaa) center / 100% 1px no-repeat; }
.zoom input::-webkit-slider-thumb { appearance: none; width: 4px; height: 11px; background: #666; }
.pct { width: 43px; }

.taskbar { height: 40px; flex: none; display: flex; background: linear-gradient(90deg, #e7e1d8, #d5dada 30%, #dcdad7 55%, #d5d9d9 75%, #dcdedd); color: #111; }
.taskbar button { display: grid; place-items: center; }
.start { width: 48px; }
.search { width: 344px; background: #fff; border: 1px solid #c2c4c4; display: flex; align-items: center; padding-left: 11px; }
.search input { flex: 1; min-width: 0; padding-left: 11px; font: 14px "Open Sans", sans-serif; outline: 0; }
.search input::placeholder { color: #333; opacity: 1; }
.apps { display: grid; grid-template-columns: repeat(8, 49px); }
.apps .run { box-shadow: inset 0 -2px #0f78d4; margin: 0 5px 0 4px; }
.badge { font: 700 10px "Open Sans", sans-serif; fill: #fff; }
.count { font: 600 12px "Open Sans", sans-serif; }
.tray { margin-left: auto; display: grid; grid-template-columns: 133px 20px 28px 22px 25px 24px 34px 68px 46px; align-items: center; border-right: 1px solid #aaa; margin-right: 4px; }
.tray .weather { display: flex; align-items: center; gap: 8px; font: 14px "Open Sans", sans-serif; }
.lines { text-align: center; line-height: 17px; }
```
